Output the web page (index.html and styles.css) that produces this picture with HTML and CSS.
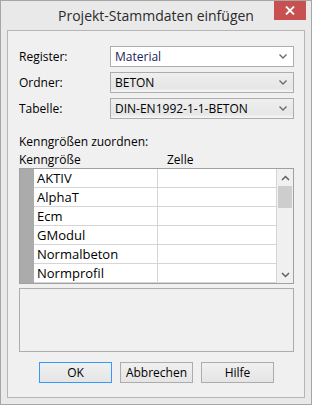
FILE: index.html
```html
<!DOCTYPE html>
<html lang="de">
<head>
    <meta charset="UTF-8">
    <meta name="viewport" content="width=device-width, initial-scale=1.0">
    <title>Projekt-Stammdaten einfügen</title>
    <link rel="stylesheet" href="styles.css">
</head>
<body>
    <div class="window">
        <div class="titlebar">
            <span></span>
            <div class="title">Projekt-Stammdaten einfügen</div>
            <button class="close" title="Schließen">
                <svg width="10" height="9" viewBox="0 0 10 9"><path d="M1 0.5 L9 8.5 M9 0.5 L1 8.5" stroke="#fff" stroke-width="1.8"/></svg>
            </button>
        </div>

        <div class="client">
            <div class="fields">
                <label>Register:</label>
                <div class="combo editable">
                    <span>Material</span>
                    <svg class="chevron" width="8" height="5" viewBox="0 0 8 5"><path d="M0.5 0.5 L4 4 L7.5 0.5" fill="none" stroke="#6d6d6d" stroke-width="1.4"/></svg>
                </div>
                <label>Ordner:</label>
                <div class="combo">
                    <span>BETON</span>
                    <svg class="chevron" width="8" height="5" viewBox="0 0 8 5"><path d="M0.5 0.5 L4 4 L7.5 0.5" fill="none" stroke="#6d6d6d" stroke-width="1.4"/></svg>
                </div>
                <label>Tabelle:</label>
                <div class="combo">
                    <span>DIN-EN1992-1-1-BETON</span>
                    <svg class="chevron" width="8" height="5" viewBox="0 0 8 5"><path d="M0.5 0.5 L4 4 L7.5 0.5" fill="none" stroke="#6d6d6d" stroke-width="1.4"/></svg>
                </div>
            </div>

            <div class="section-label">Kenngrößen zuordnen:</div>

            <div class="grid-head">
                <span>Kenngröße</span>
                <span>Zelle</span>
            </div>

            <div class="grid">
                <div class="rows" id="rows"></div>
                <div class="scrollbar">
                    <svg class="arrow" width="9" height="6" viewBox="0 0 9 6"><path d="M1 5 L4.5 1.5 L8 5" fill="none" stroke="#606060" stroke-width="1.5"/></svg>
                    <div class="track"><div class="thumb"></div></div>
                    <svg class="arrow" width="9" height="6" viewBox="0 0 9 6"><path d="M1 1 L4.5 4.5 L8 1" fill="none" stroke="#606060" stroke-width="1.5"/></svg>
                </div>
            </div>

            <div class="description"></div>

            <div class="buttons">
                <button class="btn default">OK</button>
                <button class="btn">Abbrechen</button>
                <button class="btn">Hilfe</button>
            </div>
        </div>
    </div>

    <script>
        const params = ['AKTIV', 'AlphaT', 'Ecm', 'GModul', 'Normalbeton', 'Normprofil'];

        document.getElementById('rows').innerHTML = params.map(name => `
            <div class="row">
                <div class="row-head"></div>
                <div class="cell name">${name}</div>
                <div class="cell"></div>
            </div>
        `).join('');
    </script>
</body>
</html>
```

FILE: styles.css
```css
* {
    margin: 0;
    padding: 0;
    box-sizing: border-box;
}

body {
    font-family: "Open Sans", "Noto Sans", sans-serif;
    font-size: 12px;
    color: #000;
    background: #fff;
}

.window {
    width: 312px;
    height: 405px;
    background: #e9e9e9;
    border: 1px solid #a6a6a6;
    padding: 0 6px 6px;
    display: flex;
    flex-direction: column;
}

.titlebar {
    height: 29px;
    display: grid;
    grid-template-columns: 1fr auto 1fr;
    align-items: start;
}

.title {
    font-size: 14px;
    color: #2b2b2b;
    line-height: 20px;
    padding-top: 5px;
    white-space: nowrap;
}

.close {
    justify-self: end;
    width: 32px;
    height: 19px;
    margin-right: -1px;
    background: #c75050;
    border: none;
    display: flex;
    align-items: center;
    justify-content: center;
}

.client {
    flex: 1;
    background: #f0f0f0;
    border: 1px solid #b5b5b5;
    padding: 15px 10px 0 11px;
}

.fields {
    display: grid;
    grid-template-columns: 91px 1fr;
    grid-auto-rows: 21px;
    row-gap: 5px;
    align-items: center;
}

.combo {
    height: 21px;
    border: 1px solid #acacac;
    background: linear-gradient(#efefef, #e6e6e6 80%, #f7f7f7);
    display: flex;
    align-items: center;
    justify-content: space-between;
    padding: 0 6px 0 4px;
}

.combo.editable {
    background: #fff;
    border-color: #abadb3;
    color: #1c1c5c;
}

.section-label {
    margin-top: 15px;
    line-height: 15px;
}

.grid-head {
    display: grid;
    grid-template-columns: 148px 1fr;
    line-height: 15px;
    margin-top: 3px;
}

.grid {
    margin-top: 1px;
    height: 116px;
    border: 1px solid #a0a0a0;
    display: flex;
    background: #fff;
}

.rows {
    flex: 1;
}

.row {
    display: grid;
    grid-template-columns: 14px 124px 1fr;
    height: 19px;
    font-size: 13px;
}

.row-head {
    background: #ababab;
}

.cell {
    border-bottom: 1px solid #d5d5d5;
    border-right: 1px solid #d5d5d5;
    line-height: 18px;
    padding-left: 3px;
}

.scrollbar {
    width: 16px;
    background: #f0f0f0;
    display: flex;
    flex-direction: column;
    align-items: center;
}

.scrollbar .arrow {
    margin: 6px 0 5px;
}

.track {
    flex: 1;
    width: 100%;
    padding: 0 1px;
}

.thumb {
    height: 22px;
    background: #cdcdcd;
}

.description {
    margin-top: 4px;
    height: 64px;
    border: 1px solid #adadad;
    background: #f0f0f0;
}

.buttons {
    margin-top: 10px;
    display: flex;
    justify-content: center;
    gap: 8px;
}

.btn {
    width: 73px;
    height: 21px;
    font-family: inherit;
    font-size: 12px;
    color: #000;
    border: 1px solid #acacac;
    background: linear-gradient(#f0f0f0, #e5e5e5);
}

.btn.default {
    border-color: #3399ff;
}
```
